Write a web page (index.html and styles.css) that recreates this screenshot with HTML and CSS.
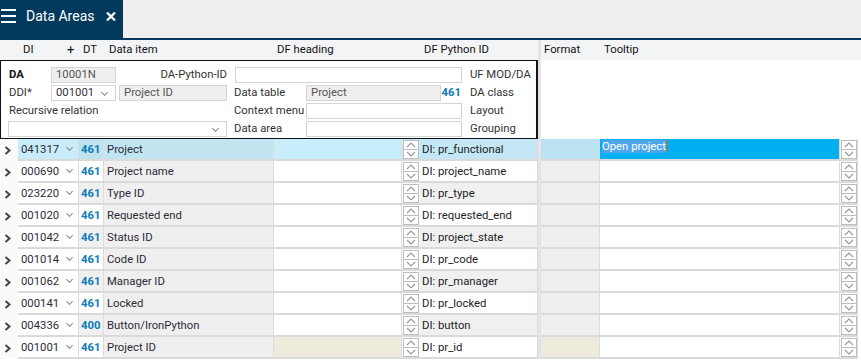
FILE: index.html
```html
<!DOCTYPE html>
<html lang="en">

<head>
    <meta charset="UTF-8">
    <title>Data Areas</title>
    <link rel="stylesheet" href="styles.css">
</head>

<body>
    <!-- tab bar -->
    <div class="tabbar">
        <div class="tab">
            <svg class="burger" width="15" height="14" viewBox="0 0 15 14">
                <rect x="0" y="0" width="15" height="2" fill="#fff" />
                <rect x="0" y="6" width="15" height="2" fill="#fff" />
                <rect x="0" y="12" width="15" height="2" fill="#fff" />
            </svg>
            <span class="tab_title">Data Areas</span>
            <svg class="tab_close" width="10" height="9" viewBox="0 0 10 9">
                <path d="M1 0.5L9 8.5M9 0.5L1 8.5" stroke="#fff" stroke-width="2.2" />
            </svg>
        </div>
    </div>

    <!-- column headers -->
    <div class="grid head">
        <div></div>
        <div class="h_di">DI<span class="plus">+</span></div>
        <div class="h_dt">DT</div>
        <div class="h_item">Data item</div>
        <div class="h_heading">DF heading</div>
        <div></div>
        <div class="h_py">DF Python ID</div>
        <div class="sep"></div>
        <div class="h_fmt">Format</div>
        <div class="h_tip">Tooltip</div>
    </div>

    <!-- detail panel -->
    <div class="panel_wrap">
        <div class="panel">
            <b class="lbl">DA</b>
            <div class="inp grey c2">10001N</div>
            <div class="lbl right c34">DA-Python-ID</div>
            <div class="inp c68"></div>
            <div class="lbl c10">UF MOD/DA</div>

            <div class="lbl">DDI*</div>
            <div class="inp sel c2">001001<i class="dd"></i></div>
            <div class="inp grey c4">Project ID</div>
            <div class="lbl c6">Data table</div>
            <div class="inp grey c7">Project</div>
            <div class="num c8">461</div>
            <div class="lbl c10">DA class</div>

            <div class="lbl c14">Recursive relation</div>
            <div class="lbl c6">Context menu</div>
            <div class="inp c78"></div>
            <div class="lbl c10">Layout</div>

            <div class="inp sel c14"><i class="dd"></i></div>
            <div class="lbl c6">Data area</div>
            <div class="inp c78"></div>
            <div class="lbl c10">Grouping</div>
        </div>
        <div class="sep"></div>
        <div class="panel_rest"></div>
    </div>

    <!-- rows -->
    <div id="rows"></div>

    <script type="text/javascript">
    var data = [
        ["041317", "461", "Project", "DI: pr_functional"],
        ["000690", "461", "Project name", "DI: project_name"],
        ["023220", "461", "Type ID", "DI: pr_type"],
        ["001020", "461", "Requested end", "DI: requested_end"],
        ["001042", "461", "Status ID", "DI: project_state"],
        ["001014", "461", "Code ID", "DI: pr_code"],
        ["001062", "461", "Manager ID", "DI: pr_manager"],
        ["000141", "461", "Locked", "DI: pr_locked"],
        ["004336", "400", "Button/IronPython", "DI: button"],
        ["001001", "461", "Project ID", "DI: pr_id"]
    ];
    var spin = '<div class="spin"><span><svg width="10" height="6" viewBox="0 0 10 6"><path d="M1 5L5 1L9 5" fill="none" stroke="#9a9a9a" stroke-width="1.2"/></svg></span>' +
        '<span><svg width="10" height="6" viewBox="0 0 10 6"><path d="M1 1L5 5L9 1" fill="none" stroke="#9a9a9a" stroke-width="1.2"/></svg></span></div>';
    var chev = '<svg width="7" height="9" viewBox="0 0 7 9"><path d="M1.5 1L5.5 4.5L1.5 8" fill="none" stroke="#444" stroke-width="2"/></svg>';
    var html = "";
    for (var i = 0; i < data.length; i++) {
        var cls = "grid row";
        if (i == 0) cls += " active";
        if (i % 2 == 0 && i > 0) cls += " alt";
        if (i == data.length - 1) cls += " beige";
        var tip = i == 0 ? '<span class="hl">Open project</span><i class="caret"></i>' : '';
        html += '<div class="' + cls + '">' +
            '<div class="chev">' + chev + '</div>' +
            '<div class="c_di">' + data[i][0] + '<i class="dd"></i></div>' +
            '<div class="c_dt">' + data[i][1] + '</div>' +
            '<div class="c_item">' + data[i][2] + '</div>' +
            '<div class="c_head"></div>' +
            '<div class="c_spin">' + spin + '</div>' +
            '<div class="c_py">' + data[i][3] + '</div>' +
            '<div class="sep"></div>' +
            '<div class="c_fmt"></div>' +
            '<div class="c_tip">' + tip + '</div>' +
            '<div class="c_spin2">' + spin + '</div>' +
            '</div>';
    }
    document.getElementById("rows").innerHTML = html;
    </script>
</body>

</html>
```
FILE: styles.css
```css
* {
    margin: 0;
    padding: 0;
    box-sizing: border-box;
}

body {
    width: 861px;
    height: 360px;
    overflow: hidden;
    background: #fff;
    font-family: Roboto, "Liberation Sans", sans-serif;
    font-size: 11.3px;
    color: #2e2a36;
}

/* tab bar */
.tabbar {
    height: 40px;
    background: #efefef;
    border-bottom: 2px solid #023a5e;
}

.tab {
    width: 123px;
    height: 38px;
    background: #023a5e;
    display: flex;
    align-items: flex-start;
    padding-top: 9px;
    color: #fff;
}

.burger {
    margin-left: 1px;
}

.tab_title {
    margin-left: 10px;
    margin-top: -3px;
    font-size: 14px;
    line-height: 20px;
}

.tab_close {
    margin-left: 12px;
    margin-top: 3px;
}

/* shared grid */
.grid {
    display: grid;
    grid-template-columns: 18px 61px 25px 170px 128px 18px 118px 3px 59px 240px 18px 3px;
}

.sep {
    background: #e6e1ea;
}

.head {
    height: 20px;
    background: #f3f4f6;
    line-height: 20px;
    color: #111;
}

.h_di {
    padding-left: 5px;
    position: relative;
}

.plus {
    position: absolute;
    left: 49px;
    font-size: 13px;
}

.h_dt {
    padding-left: 4px;
}

.h_item {
    padding-left: 5px;
}

.h_heading {
    padding-left: 3px;
}

.h_py {
    padding-left: 4px;
}

.h_fmt {
    padding-left: 3px;
}

.h_tip {
    padding-left: 4px;
}

/* panel */
.panel_wrap {
    display: flex;
    height: 79px;
}

.panel {
    width: 538px;
    border: 1px solid #111;
    border-right-width: 2px;
    padding: 5px 0 0 8px;
    display: grid;
    grid-template-columns: 42px 65px 3px 108px 7px 72px 135px 21px 8px 1fr;
    grid-template-rows: repeat(4, 17px);
    row-gap: 1px;
    align-items: center;
    color: #333;
}

.panel_wrap .sep {
    width: 3px;
}

.panel_rest {
    flex: 1;
}

.lbl {
    white-space: nowrap;
}

.panel b {
    color: #111;
}

.right {
    text-align: right;
}

.inp {
    height: 16px;
    line-height: 14px;
    border: 1px solid #d4d4d4;
    padding-left: 4px;
    background: #fff;
    position: relative;
    white-space: nowrap;
}

.inp.grey {
    background: #efefef;
    color: #555;
}

.dd {
    position: absolute;
    right: 8px;
    top: 4px;
    width: 5px;
    height: 5px;
    border-right: 1.6px solid #888;
    border-bottom: 1.6px solid #888;
    transform: rotate(45deg);
}

.num {
    color: #0b7bb8;
    font-weight: bold;
    text-align: right;
    padding-right: 1px;
}

.c2 { grid-column: 2; }
.c4 { grid-column: 4; }
.c6 { grid-column: 6; }
.c7 { grid-column: 7; }
.c8 { grid-column: 8; }
.c10 { grid-column: 10; }
.c14 { grid-column: 1 / 5; }
.c34 { grid-column: 3 / 5; }
.c68 { grid-column: 6 / 9; }
.c78 { grid-column: 7 / 9; }
.c14.inp { margin-left: -1px; }
.c68.inp { margin-left: 1px; }

/* rows */
.row {
    height: 22px;
    line-height: 21px;
}

.row > div {
    border-bottom: 2px solid #dadada;
    border-right: 1px solid #dcdcdc;
    white-space: nowrap;
    overflow: hidden;
}

.row > .chev {
    border: none;
    background: #fafafa;
    display: flex;
    align-items: center;
    padding-left: 4px;
}

.row > .sep {
    border: none;
}

.c_di {
    position: relative;
    padding-left: 3px;
    background: #fff;
}

.c_di .dd {
    right: 6px;
    top: 6px;
}

.c_dt {
    color: #0b7bb8;
    font-weight: bold;
    padding-left: 2px;
    background: #fff;
}

.c_item {
    background: #efefef;
    padding-left: 3px;
}

.c_head {
    background: #fff;
}

.c_spin, .c_spin2 {
    background: #fff;
    padding: 1px 0 0 1px;
}

.row > .c_spin {
    border-right: none;
}

.spin {
    width: 16px;
    height: 19px;
    display: flex;
    flex-direction: column;
}

.spin span {
    flex: 1;
    border: 1px solid #bdbdbd;
    display: flex;
    align-items: center;
    justify-content: center;
    background: #fff;
}

.spin span + span {
    border-top: none;
}

.c_py {
    background: #fff;
    padding-left: 2px;
    color: #222;
}

.c_fmt {
    background: #efefef;
}

.c_tip {
    background: #fff;
    padding-left: 2px;
}

.row.alt .c_dt,
.row.alt .c_py {
    background: #f0f0f0;
}

.row.beige .c_head,
.row.beige .c_fmt {
    background: #efebdc;
}

/* selected row */
.row.active .c_di { background: #c8ecf9; }
.row.active .c_dt { background: #bfe2f1; }
.row.active .c_item { background: #c2e5f2; }
.row.active .c_head { background: #c9eefb; }
.row.active .c_spin { background: #c9eefb; }
.row.active .c_py { background: #c3e7f4; }
.row.active .c_fmt { background: #bde3f2; }
.row.active .c_tip { background: #00b0f0; line-height: 16px; }
.row.active .c_spin2 { background: #fff; }

.hl {
    background: #4ea6ef;
    color: #fff;
}

.caret {
    display: inline-block;
    width: 1px;
    height: 13px;
    background: #e06a00;
    vertical-align: -2px;
}
```
